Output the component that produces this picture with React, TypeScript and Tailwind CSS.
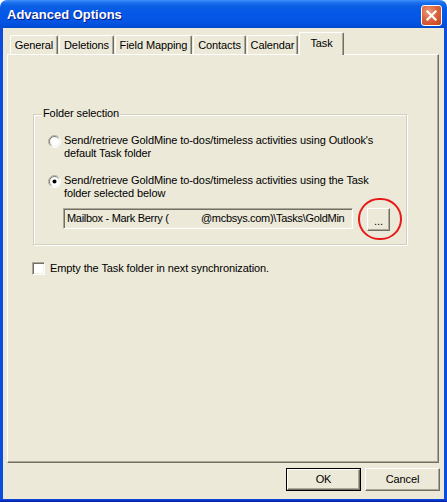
import React from "react";

const Radio = ({ checked }: { checked?: boolean }) => (
  <svg width="13" height="13" viewBox="0 0 13 13" className="shrink-0">
    <defs>
      <linearGradient id={checked ? "ro1" : "ro0"} x1="0" y1="0" x2="1" y2="1">
        <stop offset="0.35" stopColor="#ACA899" />
        <stop offset="0.65" stopColor="#FFFFFF" />
      </linearGradient>
      <linearGradient id={checked ? "ri1" : "ri0"} x1="0" y1="0" x2="1" y2="1">
        <stop offset="0.35" stopColor="#716F64" />
        <stop offset="0.65" stopColor="#F1EFE2" />
      </linearGradient>
    </defs>
    <circle cx="6.5" cy="6.5" r="6" fill="#FFFFFF" stroke={`url(#${checked ? "ro1" : "ro0"})`} strokeWidth="1" />
    <circle cx="6.5" cy="6.5" r="5" fill="#FFFFFF" stroke={`url(#${checked ? "ri1" : "ri0"})`} strokeWidth="1" />
    {checked && <circle cx="6.5" cy="6.5" r="2" fill="#000000" />}
  </svg>
);

const Tab = ({ label, w, selected }: { label: string; w: string; selected?: boolean }) =>
  selected ? (
    <div
      className={`${w} h-[23px] -mb-[1px] relative z-10 flex items-center justify-center pb-[2px] bg-[#ECE9D8] border-l border-t border-white border-r border-r-[#716F64] rounded-t-[2px] shadow-[inset_-1px_0_0_#ACA899]`}
    >
      {label}
    </div>
  ) : (
    <div
      className={`${w} h-[19px] flex items-center justify-center bg-[#ECE9D8] border-l border-t border-white border-r border-r-[#716F64] rounded-t-[2px] shadow-[inset_-1px_0_0_#ACA899]`}
    >
      {label}
    </div>
  );

export default function App() {
  return (
    <div className="w-[447px] h-[502px] flex flex-col bg-white font-['Liberation_Sans',Arial,sans-serif] text-[11px] leading-[13px] tracking-[-0.1px] text-black">
      {/* Title bar */}
      <div className="relative h-[28px] shrink-0 rounded-t-[7px] bg-[linear-gradient(to_bottom,#3e8ff9_0%,#1a6fef_10%,#0a5fe3_22%,#0558e8_45%,#0455e3_75%,#0150dd_90%,#0048c8_100%)] flex items-center pl-[7px] pt-[1px]">
        <span className="text-white font-bold text-[13px] leading-[16px] tracking-normal [text-shadow:1px_1px_#0a1883]">
          Advanced Options
        </span>
        <div className="absolute right-[5px] top-[5px] w-[21px] h-[21px] rounded-[3px] border border-white bg-[radial-gradient(circle_at_35%_30%,#ee9a7c_0%,#dc6540_45%,#c2421c_100%)] flex items-center justify-center">
          <svg width="13" height="13" viewBox="0 0 13 13">
            <path d="M2.5 2.5 L10.5 10.5 M10.5 2.5 L2.5 10.5" stroke="#FFFFFF" strokeWidth="2.2" strokeLinecap="square" />
          </svg>
        </div>
      </div>

      {/* Body */}
      <div className="flex-1 flex flex-col bg-[#ECE9D8] border-x-[3px] border-x-[#0b4ddf]">
        <div className="pt-[4px] pl-[4px] pr-[5px]">
          {/* Tabs */}
          <div className="flex items-end gap-[1px] h-[22px] ml-[3px]">
            <Tab label="General" w="w-[48px]" />
            <Tab label="Deletions" w="w-[55px]" />
            <Tab label="Field Mapping" w="w-[77px]" />
            <Tab label="Contacts" w="w-[53px]" />
            <Tab label="Calendar" w="w-[51px]" />
            <Tab label="Task" w="w-[45px]" selected />
          </div>
          {/* Panel */}
          <div className="relative z-0 h-[409px] border-l border-t border-white border-r border-b border-r-[#716F64] border-b-[#716F64] shadow-[inset_-1px_-1px_0_#ACA899]">
            {/* Group box */}
            <div className="relative mt-[59px] ml-[25px] w-[374px] h-[131px] border border-[#D0D0BF] shadow-[1px_1px_0_#fff,inset_1px_1px_0_#fff] pt-[19px] pl-[14px]">
              <div className="absolute left-[8px] -top-[8px] px-[1px] bg-[#ECE9D8]">Folder selection</div>
              <div className="flex gap-[3px]">
                <div className="pt-[1px]">
                  <Radio />
                </div>
                <div>
                  Send/retrieve GoldMine to-dos/timeless activities using Outlook's
                  <br />
                  default Task folder
                </div>
              </div>
              <div className="flex gap-[3px] mt-[14px]">
                <div className="pt-[1px]">
                  <Radio checked />
                </div>
                <div>
                  Send/retrieve GoldMine to-dos/timeless activities using the Task
                  <br />
                  folder selected below
                </div>
              </div>
              <div className="flex items-start mt-[8px] ml-[15px]">
                <div className="w-[290px] h-[21px] border border-t-[#ACA899] border-l-[#ACA899] border-r-white border-b-white shadow-[inset_1px_1px_0_#716F64,inset_-1px_-1px_0_#F1EFE2] flex items-center pl-[3px] overflow-hidden whitespace-pre bg-[#ECE9D8] tracking-[-0.3px]">
                  <span className="inline-block w-[134px] shrink-0">Mailbox - Mark Berry (</span>
                  <span>@mcbsys.com)\Tasks\GoldMin</span>
                </div>
                <div className="relative ml-[14px]">
                  <div className="w-[23px] h-[23px] border border-t-white border-l-white border-r-[#716F64] border-b-[#716F64] shadow-[inset_-1px_-1px_0_#ACA899] flex items-center justify-center pt-[3px]">
                    ...
                  </div>
                  <div className="absolute -left-[9px] -top-[10px] w-[44px] h-[42px] rounded-full border-2 border-[#E81818] pointer-events-none" />
                </div>
              </div>
            </div>
            {/* Checkbox */}
            <div className="flex items-center mt-[17px] ml-[24px] gap-[5px]">
              <div className="w-[13px] h-[13px] border border-t-[#ACA899] border-l-[#ACA899] border-r-white border-b-white shadow-[inset_1px_1px_0_#716F64,inset_-1px_-1px_0_#F1EFE2] bg-white" />
              <span>Empty the Task folder in next synchronization.</span>
            </div>
          </div>
        </div>
        {/* Buttons */}
        <div className="flex justify-end gap-[4px] mt-[5px] pr-[4px]">
          <div className="w-[75px] h-[23px] border border-black">
            <div className="w-full h-full border border-t-white border-l-white border-r-[#716F64] border-b-[#716F64] shadow-[inset_-1px_-1px_0_#ACA899] flex items-center justify-center">
              OK
            </div>
          </div>
          <div className="w-[75px] h-[23px] border border-t-white border-l-white border-r-[#716F64] border-b-[#716F64] shadow-[inset_-1px_-1px_0_#ACA899] flex items-center justify-center">
            Cancel
          </div>
        </div>
      </div>
      <div className="h-[3px] shrink-0 bg-[linear-gradient(to_bottom,#0b4ddf,#0833c4,#001c9c)]" />
    </div>
  );
}
